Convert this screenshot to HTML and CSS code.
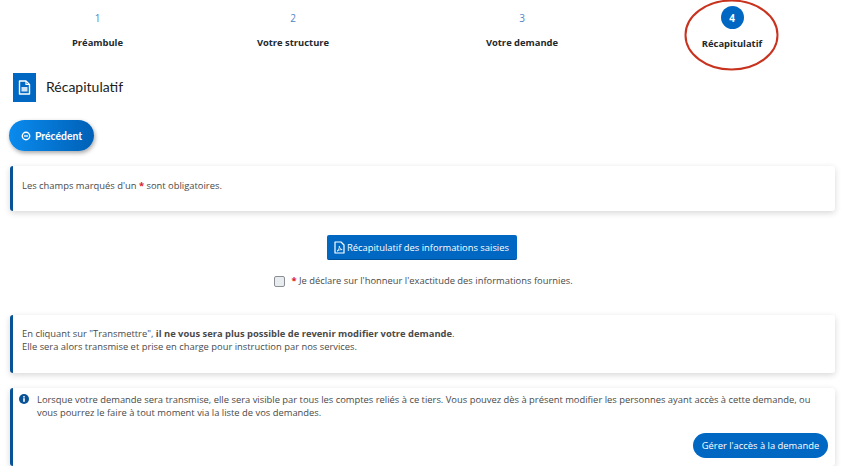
FILE: index.html

```html
<!DOCTYPE html>
<html lang="fr">
<head>
  <meta charset="UTF-8" />
  <title>Récapitulatif</title>
  <link rel="stylesheet" href="styles.css">
</head>
<body>
  <div class="steps">
    <div class="step"><span class="step-num">1</span><span class="step-label">Préambule</span></div>
    <div class="step"><span class="step-num">2</span><span class="step-label">Votre structure</span></div>
    <div class="step"><span class="step-num">3</span><span class="step-label">Votre demande</span></div>
    <div class="step active"><span class="step-num">4</span><span class="step-label">Récapitulatif</span></div>
    <svg class="oval" width="96" height="72" viewBox="0 0 96 72">
      <ellipse cx="47.500" cy="35" rx="46" ry="34.500" fill="none" stroke="#c8331f" stroke-width="2"/>
    </svg>
  </div>

  <div class="page-title">
    <div class="title-icon">
      <svg width="13" height="15" viewBox="0 0 13 15">
        <path d="M1.500 1h6.500l3.500 3.500v9.500h-10z" fill="none" stroke="#fff" stroke-width="1.400" stroke-linejoin="round"/>
        <path d="M8 1v3.500h3.500" fill="none" stroke="#fff" stroke-width="1.200"/>
        <rect x="3.500" y="7" width="6" height="4.500" fill="#cfe3f5"/>
      </svg>
    </div>
    <h1>Récapitulatif</h1>
  </div>

  <button class="btn-prev">
    <svg width="10" height="10" viewBox="0 0 10 10">
      <circle cx="5" cy="5" r="3.700" fill="none" stroke="#fff" stroke-width="1.400"/>
      <path d="M3 5h4" stroke="#fff" stroke-width="1.300"/>
    </svg>
    Précédent
  </button>

  <div class="panel panel-required">
    Les champs marqués d'un <span class="req">*</span> sont obligatoires.
  </div>

  <div class="actions">
    <button class="btn-recap">
      <svg width="11" height="13" viewBox="0 0 11 13">
        <path d="M1 1h6l3 3v8h-9z" fill="none" stroke="#fff" stroke-width="1.200" stroke-linejoin="round"/>
        <path d="M3 10.200c1.400-1 2.600-3.400 2.300-5 .3 1.800 1.200 3 2.900 3.400-1.800-.1-3.700.5-5.200 1.600z" fill="none" stroke="#fff" stroke-width=".8"/>
      </svg>
      Récapitulatif des informations saisies
    </button>
    <label class="declare">
      <input type="checkbox">
      <span><span class="req">*</span> Je déclare sur l'honneur l'exactitude des informations fournies.</span>
    </label>
  </div>

  <div class="panel panel-warning">
    En cliquant sur "Transmettre", <b>il ne vous sera plus possible de revenir modifier votre demande</b>.<br>
    Elle sera alors transmise et prise en charge pour instruction par nos services.
  </div>

  <div class="panel panel-info">
    <div class="info-row">
      <svg class="info-icon" width="10" height="10" viewBox="0 0 10 10">
        <circle cx="5" cy="5" r="5" fill="#0a5296"/>
        <rect x="4.200" y="4.200" width="1.600" height="3.600" fill="#fff"/>
        <rect x="4.200" y="2.100" width="1.600" height="1.400" fill="#fff"/>
      </svg>
      <p>Lorsque votre demande sera transmise, elle sera visible par tous les comptes reliés à ce tiers. Vous pouvez dès à présent modifier les personnes ayant accès à cette demande, ou vous pourrez le faire à tout moment via la liste de vos demandes.</p>
    </div>
    <div class="info-actions">
      <button class="btn-access">Gérer l'accès à la demande</button>
    </div>
  </div>
</body>
</html>
```

FILE: styles.css

```css
body {
  font-family: 'Open Sans', sans-serif;
  font-size: 9.4px;
  color: #4a4a4a;
  background: white;
  margin: 0;
  padding: 0;
  overflow: hidden;
}
button {
  font-family: 'Open Sans', sans-serif;
  border: none;
  color: white;
  cursor: pointer;
}
.req {
  color: #d9202e;
  font-weight: bold;
}

.steps {
  position: relative;
  display: grid;
  grid-template-columns: 195px 196px 262px 158px;
  height: 73px;
}
.step {
  display: flex;
  flex-direction: column;
  align-items: center;
  padding-top: 6px;
}
.step-num {
  width: 23px;
  height: 23px;
  line-height: 24px;
  text-align: center;
  color: #4f86c6;
  font-size: 10px;
  border-radius: 50%;
}
.step-label {
  margin-top: 5px;
  font-size: 9.4px;
  line-height: 18px;
  font-weight: bold;
  color: #23282d;
}
.step.active .step-num {
  background: #0068c2;
  color: white;
  font-weight: bold;
}
.step.active .step-label {
  margin-top: 6px;
}
.oval {
  position: absolute;
  left: 684px;
  top: 0;
}

.page-title {
  display: flex;
  align-items: center;
  gap: 10px;
  margin-left: 13px;
}
.title-icon {
  width: 23px;
  height: 29px;
  background: #0068c2;
  display: flex;
  align-items: center;
  justify-content: center;
}
.page-title h1 {
  margin: 0 0 3px;
  font-family: 'Lato', sans-serif;
  font-size: 14px;
  font-weight: normal;
  color: #1c1c1c;
}

.btn-prev {
  display: flex;
  align-items: center;
  gap: 4px;
  margin: 18px 0 0 9px;
  width: 85px;
  height: 31px;
  padding: 0 0 0 12px;
  border-radius: 16px;
  font-family: 'Lato', sans-serif;
  font-size: 10.4px;
  font-weight: bold;
  background: linear-gradient(90deg, #0a8bee, #0060b6);
  box-shadow: 1px 2px 4px rgba(0,0,0,0.35);
}

.panel {
  margin: 0 15px 0 10px;
  padding: 0 9px;
  background: white;
  border-left: 3px solid #0a5296;
  border-radius: 3px;
  box-shadow: 0 2px 6px rgba(0,0,0,0.16);
  line-height: 13px;
}
.panel-required {
  margin-top: 15px;
  height: 45px;
  padding-top: 13px;
  box-sizing: border-box;
}

.actions {
  display: flex;
  flex-direction: column;
  align-items: center;
  margin-top: 24px;
  margin-left: -1px;
}
.btn-recap {
  display: flex;
  align-items: center;
  gap: 2px;
  width: 190px;
  height: 25px;
  padding: 0 0 0 7px;
  margin-right: 5px;
  font-size: 9.4px;
  background: #0068c2;
  border-radius: 2px;
  border-bottom: 1px solid #00509a;
}
.declare {
  display: flex;
  align-items: center;
  gap: 6px;
  margin-top: 14px;
  margin-right: 2px;
}
.declare input {
  width: 11px;
  height: 11px;
  margin: 2px 0 0;
  appearance: none;
  background: #e9ecef;
  border: 1px solid #8a8f96;
  border-radius: 2px;
}

.panel-warning {
  margin-top: 28px;
  height: 58px;
  padding-top: 12px;
  box-sizing: border-box;
}
.panel-info {
  margin-top: 15px;
  height: 78px;
  padding: 5px 7px 6px 6px;
  box-sizing: border-box;
}
.info-row {
  display: flex;
  gap: 8px;
}
.info-row p {
  margin: 0;
  flex: 1;
}
.info-icon {
  flex: none;
  margin-top: 1px;
}
.info-actions {
  display: flex;
  justify-content: flex-end;
  margin-top: 14px;
}
.btn-access {
  width: 135px;
  height: 25px;
  padding: 0;
  font-size: 9.4px;
  background: #0068c2;
  border-radius: 13px;
}
```
